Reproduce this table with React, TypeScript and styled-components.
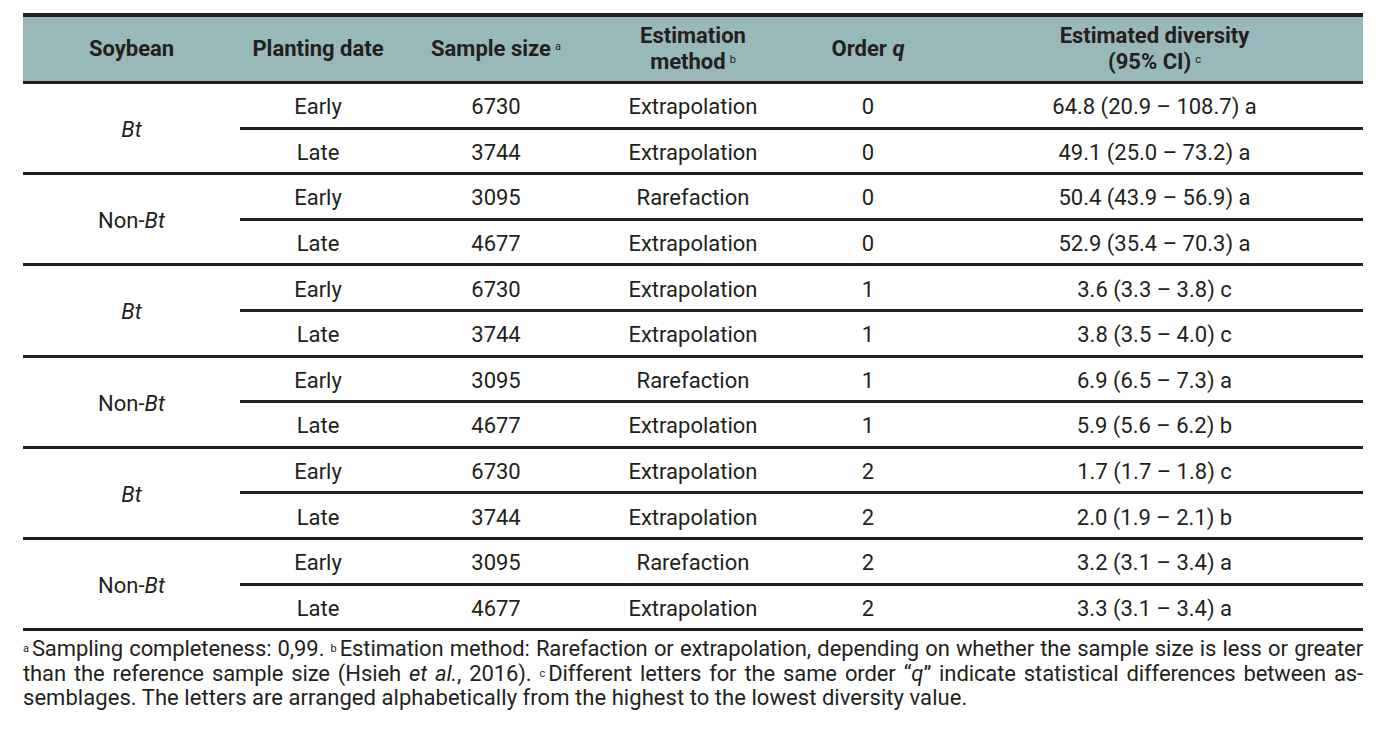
import React from "react";
import styled, { createGlobalStyle } from "styled-components";

const Global = createGlobalStyle`
  html, body { margin: 0; padding: 0; background: #ffffff; }
  body { font-family: Roboto, "Noto Sans", "Liberation Sans", sans-serif; color: #231f20; }
`;

const COLS = "217px 156px 200px 194px 156px 417px";
const SUB_COLS = "156px 200px 194px 156px 417px";
const LINE = "#231f20";

const Page = styled.div`
  padding: 13px 22px 0 23px;
  width: 1340px;
`;

const Table = styled.div`
  border-top: 4px solid ${LINE};
`;

const HeaderRow = styled.div`
  display: grid;
  grid-template-columns: ${COLS};
  height: 64px;
  background: #99b8b9;
  border-bottom: 3px solid ${LINE};
`;

const Th = styled.div`
  display: flex;
  align-items: center;
  justify-content: center;
  text-align: center;
  font-weight: 700;
  font-size: 22px;
  line-height: 26px;
`;

const Sup = styled.sup`
  font-size: 11px;
  font-weight: 400;
  vertical-align: top;
  position: relative;
  top: -2px;
  margin-left: 4px;
`;

const Group = styled.div`
  display: grid;
  grid-template-columns: 217px 1fr;
  border-bottom: 3px solid ${LINE};
`;

const GroupLabel = styled.div`
  display: flex;
  align-items: center;
  justify-content: center;
  font-size: 22px;
  padding-top: 3px;
`;

const SubRow = styled.div<{ $divided?: boolean }>`
  display: grid;
  grid-template-columns: ${SUB_COLS};
  height: 42.6px;
  border-bottom: ${(p) => (p.$divided ? `3px solid ${LINE}` : "none")};
`;

const Td = styled.div`
  display: flex;
  align-items: center;
  justify-content: center;
  font-size: 22px;
  white-space: nowrap;
  padding-top: 3px;
`;

const Notes = styled.div`
  margin-top: 6px;
  font-size: 22px;
  line-height: 24.5px;
`;

const NoteLine = styled.div<{ $justify?: boolean }>`
  text-align: ${(p) => (p.$justify ? "justify" : "left")};
  text-align-last: ${(p) => (p.$justify ? "justify" : "left")};
  letter-spacing: ${(p) => (p.$justify ? "-0.1px" : "0.05px")};
  white-space: nowrap;
`;

const NoteSup = styled.sup`
  font-size: 11px;
  vertical-align: top;
  position: relative;
  top: 0px;
  margin-right: 3px;
`;

type Row = { date: string; n: string; method: string; q: string; div: string };
type G = { label: React.ReactNode; rows: [Row, Row] };

const bt = <i>Bt</i>;
const nonBt = (
  <span>
    Non-<i>Bt</i>
  </span>
);

const mk = (q: string, d: [string, string, string, string]): G[] => [
  {
    label: bt,
    rows: [
      { date: "Early", n: "6730", method: "Extrapolation", q, div: d[0] },
      { date: "Late", n: "3744", method: "Extrapolation", q, div: d[1] },
    ],
  },
  {
    label: nonBt,
    rows: [
      { date: "Early", n: "3095", method: "Rarefaction", q, div: d[2] },
      { date: "Late", n: "4677", method: "Extrapolation", q, div: d[3] },
    ],
  },
];

const groups: G[] = [
  ...mk("0", [
    "64.8 (20.9 \u2013 108.7) a",
    "49.1 (25.0 \u2013 73.2) a",
    "50.4 (43.9 \u2013 56.9) a",
    "52.9 (35.4 \u2013 70.3) a",
  ]),
  ...mk("1", [
    "3.6 (3.3 \u2013 3.8) c",
    "3.8 (3.5 \u2013 4.0) c",
    "6.9 (6.5 \u2013 7.3) a",
    "5.9 (5.6 \u2013 6.2) b",
  ]),
  ...mk("2", [
    "1.7 (1.7 \u2013 1.8) c",
    "2.0 (1.9 \u2013 2.1) b",
    "3.2 (3.1 \u2013 3.4) a",
    "3.3 (3.1 \u2013 3.4) a",
  ]),
];

export default function App() {
  return (
    <Page>
      <Global />
      <Table>
        <HeaderRow>
          <Th>Soybean</Th>
          <Th>Planting date</Th>
          <Th>
            <span>
              Sample size<Sup>a</Sup>
            </span>
          </Th>
          <Th>
            <span>
              Estimation
              <br />
              method<Sup>b</Sup>
            </span>
          </Th>
          <Th>
            <span>
              Order <i>q</i>
            </span>
          </Th>
          <Th>
            <span>
              Estimated diversity
              <br />
              (95% CI)<Sup>c</Sup>
            </span>
          </Th>
        </HeaderRow>
        {groups.map((g, gi) => (
          <Group key={gi}>
            <GroupLabel>{g.label}</GroupLabel>
            <div>
              {g.rows.map((r, ri) => (
                <SubRow key={ri} $divided={ri === 0}>
                  <Td>{r.date}</Td>
                  <Td>{r.n}</Td>
                  <Td>{r.method}</Td>
                  <Td>{r.q}</Td>
                  <Td>{r.div}</Td>
                </SubRow>
              ))}
            </div>
          </Group>
        ))}
      </Table>
      <Notes>
        <NoteLine $justify>
          <NoteSup>a</NoteSup>Sampling completeness: 0,99. <NoteSup>b</NoteSup>Estimation method: Rarefaction or
          extrapolation, depending on whether the sample size is less or greater
        </NoteLine>
        <NoteLine $justify>
          than the reference sample size (Hsieh <i>et al.</i>, 2016). <NoteSup>c</NoteSup>Different letters for the
          same order &ldquo;<i>q</i>&rdquo; indicate statistical differences between as-
        </NoteLine>
        <NoteLine>
          semblages. The letters are arranged alphabetically from the highest to the lowest diversity value.
        </NoteLine>
      </Notes>
    </Page>
  );
}
